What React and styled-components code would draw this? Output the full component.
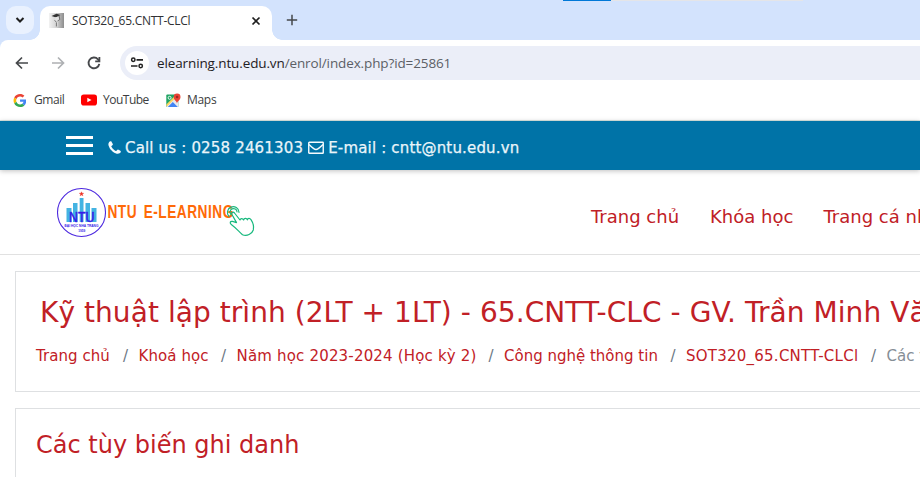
import React from "react";
import styled, { createGlobalStyle } from "styled-components";

const Global = createGlobalStyle`
  * { box-sizing: border-box; }
  html, body { margin: 0; padding: 0; background: #fff; overflow: hidden; }
  h1, h2 { margin: 0; font-weight: 400; }
  a { color: inherit; text-decoration: none; }
  svg { display: block; flex: none; }
`;

const Window = styled.div`
  width: 920px;
  height: 477px;
  overflow: hidden;
  background: #fff;
  white-space: nowrap;
`;

const BrowserFrame = styled.header`
  background: #d3e3fd;
`;

const TabStrip = styled.div`
  position: relative;
  height: 40px;
  display: flex;
  padding: 6px 0 0 6px;
`;

const LoadingTrack = styled.div`
  position: absolute;
  top: 0;
  left: 563px;
  width: 240px;
  height: 1px;
  background: linear-gradient(to right, #0078d7 48px, #e4e5e8 48px);
`;

const TabSearch = styled.button`
  width: 28px;
  height: 28px;
  border: 0;
  padding: 0;
  border-radius: 10px;
  background: #e9f1fe;
  display: grid;
  place-items: center;
`;

const Tab = styled.div`
  position: relative;
  width: 232px;
  height: 34px;
  margin-left: 6px;
  padding: 0 10px 5px 9px;
  border-radius: 10px 10px 0 0;
  background: #fff;
  display: flex;
  align-items: center;
  &::before, &::after {
    content: "";
    position: absolute;
    bottom: 0;
    width: 10px;
    height: 10px;
  }
  &::before { left: -10px; background: radial-gradient(circle at 0 0, transparent 9.5px, #fff 10px); }
  &::after { right: -10px; background: radial-gradient(circle at 100% 0, transparent 9.5px, #fff 10px); }
`;

const TabTitle = styled.span`
  flex: 1;
  margin-left: 8px;
  font: 12px/16px "Open Sans", "Noto Sans", sans-serif;
  letter-spacing: -0.26px;
  color: #303134;
`;

const NewTab = styled.button`
  width: 28px;
  height: 28px;
  margin-left: 6px;
  padding: 0;
  border: 0;
  background: none;
  display: grid;
  place-items: center;
`;

const Toolbar = styled.div`
  height: 42px;
  padding: 4px 0 0 14px;
  display: flex;
  align-items: center;
  gap: 20px;
  background: #fff;
  border-radius: 8px 0 0 0;
`;

const AddressBar = styled.div`
  flex: 1;
  height: 34px;
  margin-left: -2px;
  padding-left: 5px;
  border-radius: 17px 0 0 17px;
  background: #ebeef8;
  display: flex;
  align-items: center;
`;

const SiteInfo = styled.span`
  width: 24px;
  height: 24px;
  border-radius: 50%;
  background: #fff;
  display: grid;
  place-items: center;
`;

const Url = styled.span`
  margin-left: 8px;
  font: 13.5px/20px "Open Sans", "Noto Sans", sans-serif;
  letter-spacing: -0.12px;
  color: #5c5f66;
  b { font-weight: 400; color: #1f2023; }
`;

const Bookmarks = styled.nav`
  height: 39px;
  padding: 0 0 2px 13px;
  display: flex;
  align-items: center;
  background: #fff;
  border-bottom: 1px solid #dbe7e2;
`;

const Bookmark = styled.a`
  width: ${(p) => p.$width}px;
  display: flex;
  align-items: center;
  gap: ${(p) => p.$gap}px;
  font: 12px/16px "Open Sans", "Noto Sans", sans-serif;
  letter-spacing: ${(p) => p.$spacing}px;
  color: #3c3d40;
`;

const ContactBar = styled.div`
  position: relative;
  height: 49px;
  padding: 0 0 0 66px;
  background: #0073a7;
  box-shadow: 0 1px 5px rgba(0, 0, 0, 0.25);
  display: flex;
  align-items: center;
`;

const MenuButton = styled.button`
  width: 27px;
  height: 19px;
  padding: 0;
  border: 0;
  background: repeating-linear-gradient(to bottom, #fff 0 3px, transparent 3px 8px);
`;

const Contact = styled.span`
  display: flex;
  align-items: center;
  gap: 4px;
  margin-left: ${(p) => p.$offset}px;
  padding-top: 5px;
  color: #eaf5fa;
  font: 15px/20px "DejaVu Sans", Verdana, sans-serif;
  letter-spacing: ${(p) => p.$spacing}px;
  -webkit-text-stroke: 0.25px #eaf5fa;
  svg { margin-top: -2px; }
`;

const SiteHeader = styled.div`
  height: 85px;
  padding-left: 56px;
  border-bottom: 1px solid #e1e1e1;
  display: flex;
`;

const Brand = styled.a`
  flex: none;
  width: 535px;
  padding-top: 17px;
`;

const MainNav = styled.nav`
  display: flex;
  padding-top: 34px;
`;

const NavLink = styled.a`
  width: ${(p) => p.$width}px;
  flex: none;
  font: 18px/26px "DejaVu Sans", Verdana, sans-serif;
  color: #bf2026;
`;

const Card = styled.section`
  width: 930px;
  height: ${(p) => p.$height}px;
  margin: ${(p) => p.$top}px 0 0 15px;
  padding: 20px;
  border: 1px solid #dee0e2;
  color: #c12026;
  font-family: "DejaVu Sans", Verdana, sans-serif;
`;

const CourseTitle = styled.h1`
  padding: 3px 0 0 4px;
  font-size: 28px;
  line-height: 36px;
  letter-spacing: 0.06px;
`;

const SectionTitle = styled.h2`
  font-size: 24px;
  line-height: 32px;
`;

const Breadcrumbs = styled.ol`
  display: flex;
  list-style: none;
  margin: 14px 0 0;
  padding: 0;
  font-size: 15px;
  line-height: 22px;
`;

const Crumb = styled.li`
  flex: none;
  width: ${(p) => p.$width}px;
  letter-spacing: ${(p) => p.$spacing}px;
  color: ${(p) => (p.$muted ? "#868e96" : "#c12026")};
`;

const Slash = styled.li`
  flex: none;
  width: 15.5px;
  color: #6c7884;
`;

const crumbs = [
  { text: "Trang chủ", width: 87, spacing: 0.05 },
  { text: "Khoá học", width: 82.5, spacing: 0.1 },
  { text: "Năm học 2023-2024 (Học kỳ 2)", width: 252, spacing: 0.18 },
  { text: "Công nghệ thông tin", width: 166.5, spacing: 0 },
  { text: "SOT320_65.CNTT-CLCl", width: 185, spacing: 0.24 },
  { text: "Các tùy biến ghi danh", width: 200, spacing: 0, muted: true },
];

const Favicon = () => (
  <svg width="15" height="15" viewBox="0 0 15 15">
    <defs>
      <linearGradient id="fav" x1="0" x2="1">
        <stop offset="0" stopColor="#f2f2f2" /><stop offset=".5" stopColor="#d2d2d2" /><stop offset="1" stopColor="#8c8c8c" />
      </linearGradient>
    </defs>
    <rect width="15" height="15" fill="url(#fav)" />
    <path d="M2.500 3 7.500.8l4 1.200-4.500 2.500z" fill="#333" />
    <path d="M5.500 4.500 9.500 3.500l1 3.500-1.800 1.500-.5 5.500H7L6.700 9z" fill="#e2e2e2" />
    <path d="m10 2.500.8 4-2.300 1.500M5.500 7.500l2 1.500M7.400 9.500v4" fill="none" stroke="#555" strokeWidth=".8" />
  </svg>
);

const stroke = { fill: "none", stroke: "#46484b", strokeWidth: 1.7 };

const Chevron = () => (
  <svg width="10" height="8" viewBox="0 0 10 8"><path d="m1.500 2 3.500 3.500L8.500 2" {...stroke} stroke="#1f1f1f" strokeWidth="2" /></svg>
);
const Close = () => (
  <svg width="12" height="12" viewBox="0 0 12 12"><path d="m2.500 2.500 7 7m0-7-7 7" {...stroke} stroke="#1f1f1f" /></svg>
);
const Plus = () => (
  <svg width="12" height="12" viewBox="0 0 12 12"><path d="M6 .8v10.400M.8 6h10.400" {...stroke} strokeWidth="1.500" /></svg>
);
const Back = () => (
  <svg width="16" height="16" viewBox="0 0 16 16"><path d="M8 2.500 2.500 8 8 13.500M2.700 8H14" {...stroke} /></svg>
);
const Forward = () => (
  <svg width="16" height="16" viewBox="0 0 16 16"><path d="M8 2.500 13.500 8 8 13.500M13.300 8H2" {...stroke} stroke="#aeb0b3" /></svg>
);
const Reload = () => (
  <svg width="16" height="16" viewBox="0 0 16 16">
    <path d="M13.300 8.800A5.400 5.400 0 1 1 12 4.300l1.300 1.500" {...stroke} strokeWidth="1.900" />
    <path d="M13.400 2v4.400H9.200" {...stroke} strokeWidth="1.800" />
  </svg>
);
const Tune = () => (
  <svg width="14" height="14" viewBox="0 0 14 14">
    <circle cx="3.300" cy="3.800" r="1.700" {...stroke} stroke="#222" strokeWidth="1.500" />
    <circle cx="10.700" cy="10" r="1.700" {...stroke} stroke="#222" strokeWidth="1.500" />
    <path d="M6.500 3.800H13M1 10h6.500" {...stroke} stroke="#222" />
  </svg>
);
const Google = () => (
  <svg width="13" height="13" viewBox="-2 0 48 48">
    <path fill="#EA4335" d="M24 9.500c3.540 0 6.710 1.220 9.210 3.600l6.850-6.850C35.900 2.380 30.470 0 24 0 14.620 0 6.510 5.380 2.560 13.220l7.980 6.190C12.430 13.720 17.740 9.500 24 9.500z" />
    <path fill="#4285F4" d="M46.980 24.550c0-1.570-.15-3.090-.38-4.550H24v9.020h12.940c-.58 2.960-2.260 5.480-4.780 7.180l7.730 6c4.510-4.180 7.090-10.360 7.090-17.650z" />
    <path fill="#FBBC05" d="M10.530 28.590A14.500 14.500 0 0 1 9.770 24c0-1.600.27-3.140.76-4.590l-7.980-6.190A23.900 23.900 0 0 0 0 24c0 3.880.92 7.540 2.560 10.780z" />
    <path fill="#34A853" d="M24 48c6.480 0 11.930-2.130 15.890-5.810l-7.730-6C30.010 37.640 27.240 38.490 24 38.490c-6.260 0-11.570-4.220-13.470-9.910l-7.980 6.190C6.510 42.620 14.620 48 24 48z" />
  </svg>
);
const YouTube = () => (
  <svg width="16" height="12" viewBox="0 0 16 12"><rect y=".5" width="16" height="11" rx="2.800" fill="#f00" /><path d="m6.300 3.700 4.200 2.300-4.200 2.300z" fill="#fff" /></svg>
);
const Maps = () => (
  <svg width="15" height="15" viewBox="0 0 15 15">
    <rect x=".3" y="1.500" width="12.500" height="12.500" rx="1" fill="#1fa463" />
    <path d="m.5 12.700 10-10 2.300 2V14H1z" fill="#e8eaed" />
    <path d="m1.800 14 5-5 5 5z" fill="#4285f4" />
    <path d="m.3 11.500 8.500-8.500 1.500 1.200L.7 13.700z" fill="#fdd663" />
    <circle cx="3.600" cy="4.800" r="1.500" fill="none" stroke="#fff" strokeWidth=".9" />
    <path d="M11 10.500c-.4-2.700-3.300-3.400-3.300-6.500a3.400 3.400 0 0 1 6.800 0c0 3.100-3 3.800-3.500 6.500z" fill="#ea4335" />
    <circle cx="11.100" cy="4" r="1.300" fill="#992b24" />
  </svg>
);
const Phone = () => (
  <svg width="13" height="13" viewBox="0 0 1408 1408">
    <path fill="#f5fbfe" d="M1408 1112c0 27-12 79-23 104-16 37-58 61-92 80-44 24-89 38-139 38-70 0-133-28-197-52-46-17-91-37-133-62-129-80-284-235-364-364-25-42-45-87-62-133-24-64-52-127-52-197 0-50 14-95 38-139 19-34 43-76 80-92 25-11 77-23 104-23 5 0 11 0 16 2 16 5 32 41 40 57 25 44 49 90 75 133 12 20 35 45 35 69 0 46-138 114-138 155 0 21 19 47 30 65 78 140 175 237 315 315 18 11 44 30 65 30 41 0 108-138 154-138 24 0 49 23 69 35 43 26 89 50 133 75 16 8 52 24 57 40 2 5 2 11 2 16z" transform="translate(-400 -310) scale(1.270)" />
  </svg>
);
const Mail = () => (
  <svg width="16" height="13" viewBox="0 0 16 13"><rect x=".75" y="1.250" width="14.500" height="11" rx=".6" fill="none" stroke="#f5fbfe" strokeWidth="1.400" /><path d="M1 3.500c2 2 5.500 5 7 5s5-3 7-5" fill="none" stroke="#f5fbfe" strokeWidth="1.400" /></svg>
);

const Logo = () => (
  <svg width="202" height="52" viewBox="0 0 202 52">
    <circle cx="25.500" cy="25.500" r="24" fill="#fff" stroke="#4b27df" strokeWidth="1.100" />
    <path d="M10.500 21h5v14h-5zM17 16h4.500v19H17zM23.700 11h3.800v24h-3.800zM29.500 16H34v19h-4.500zM35.500 21h5v14h-5z" fill="#43b3e2" />
    <path d="m25.500 4.800.6 1.500h1.600l-1.300 1 .5 1.500-1.400-.9-1.400.9.500-1.500-1.300-1h1.600z" fill="#ed3528" stroke="#ed3528" strokeWidth=".4" />
    <text x="13" y="35" textLength="25.500" lengthAdjust="spacingAndGlyphs" fontFamily="Liberation Sans" fontSize="14" fontWeight="400" fill="#371be8" stroke="#371be8" strokeWidth=".5">NTU</text>
    <text x="8.500" y="40.300" textLength="34" lengthAdjust="spacingAndGlyphs" fontFamily="Liberation Sans" fontSize="4.300" fontWeight="700" fill="#371be8">ĐẠI HỌC NHA TRANG</text>
    <text x="22.300" y="45" textLength="7" lengthAdjust="spacingAndGlyphs" fontFamily="Liberation Sans" fontSize="3.700" fontWeight="700" fill="#371be8">1959</text>
    <text transform="translate(51.500 30.700) scale(.74 1)" textLength="170" wordSpacing="3" fontFamily="Liberation Sans" fontSize="18.500" fontWeight="700" fill="#ff6a08">NTU E-LEARNING</text>
    <g fill="none" stroke="#18b97e" strokeWidth="1.200" strokeLinecap="round" strokeLinejoin="round">
      <path d="M173 29.500a5.800 5.800 0 1 1 10-4.200M175 27.500a3.500 3.500 0 1 1 6-2.700" />
      <path d="m184 33-5.500-7c-1.400-1.700-3.500-.4-2.700 1.300l4.700 8.300-4-1.200c-2.500-.5-3 1.700-1.200 3 4 2.900 7 6.500 11.200 10.400 4.500 1.800 9.500-.8 10.800-4.800 1-4.300-.3-7.200-2.300-10.300-1.200-2-3.200-1.700-3.600.1-.8-2-3.300-2-3.800.2-.9-1.800-3-2-3.600 0z" />
    </g>
  </svg>
);

export default function App() {
  return (
    <Window>
      <Global />
      <BrowserFrame>
        <TabStrip>
          <LoadingTrack />
          <TabSearch><Chevron /></TabSearch>
          <Tab>
            <Favicon />
            <TabTitle>SOT320_65.CNTT-CLCl</TabTitle>
            <Close />
          </Tab>
          <NewTab><Plus /></NewTab>
        </TabStrip>
        <Toolbar>
          <Back /><Forward /><Reload />
          <AddressBar>
            <SiteInfo><Tune /></SiteInfo>
            <Url><b>elearning.ntu.edu.vn</b>/enrol/index.php?id=25861</Url>
          </AddressBar>
        </Toolbar>
        <Bookmarks>
          <Bookmark $width={68} $gap={8} $spacing={-0.45}><Google />Gmail</Bookmark>
          <Bookmark $width={85} $gap={6} $spacing={-0.5}><YouTube />YouTube</Bookmark>
          <Bookmark $width={60} $gap={6} $spacing={-0.3}><Maps />Maps</Bookmark>
        </Bookmarks>
      </BrowserFrame>
      <ContactBar>
        <MenuButton />
        <Contact $offset={15} $spacing={0.17}><Phone />Call us : 0258 2461303</Contact>
        <Contact $offset={5} $spacing={0.17}><Mail />E-mail : cntt@ntu.edu.vn</Contact>
      </ContactBar>
      <SiteHeader>
        <Brand><Logo /></Brand>
        <MainNav>
          <NavLink $width={119}>Trang chủ</NavLink>
          <NavLink $width={113.5}>Khóa học</NavLink>
          <NavLink $width={140}>Trang cá nhân</NavLink>
        </MainNav>
      </SiteHeader>
      <Card $height={121} $top={16}>
        <CourseTitle>Kỹ thuật lập trình (2LT + 1LT) - 65.CNTT-CLC - GV. Trần Minh Văn</CourseTitle>
        <Breadcrumbs>
          {crumbs.map((c, i) => (
            <React.Fragment key={c.text}>
              {i > 0 && <Slash>/</Slash>}
              <Crumb $width={c.width} $spacing={c.spacing} $muted={c.muted}>{c.text}</Crumb>
            </React.Fragment>
          ))}
        </Breadcrumbs>
      </Card>
      <Card $height={100} $top={16}>
        <SectionTitle>Các tùy biến ghi danh</SectionTitle>
      </Card>
    </Window>
  );
}
